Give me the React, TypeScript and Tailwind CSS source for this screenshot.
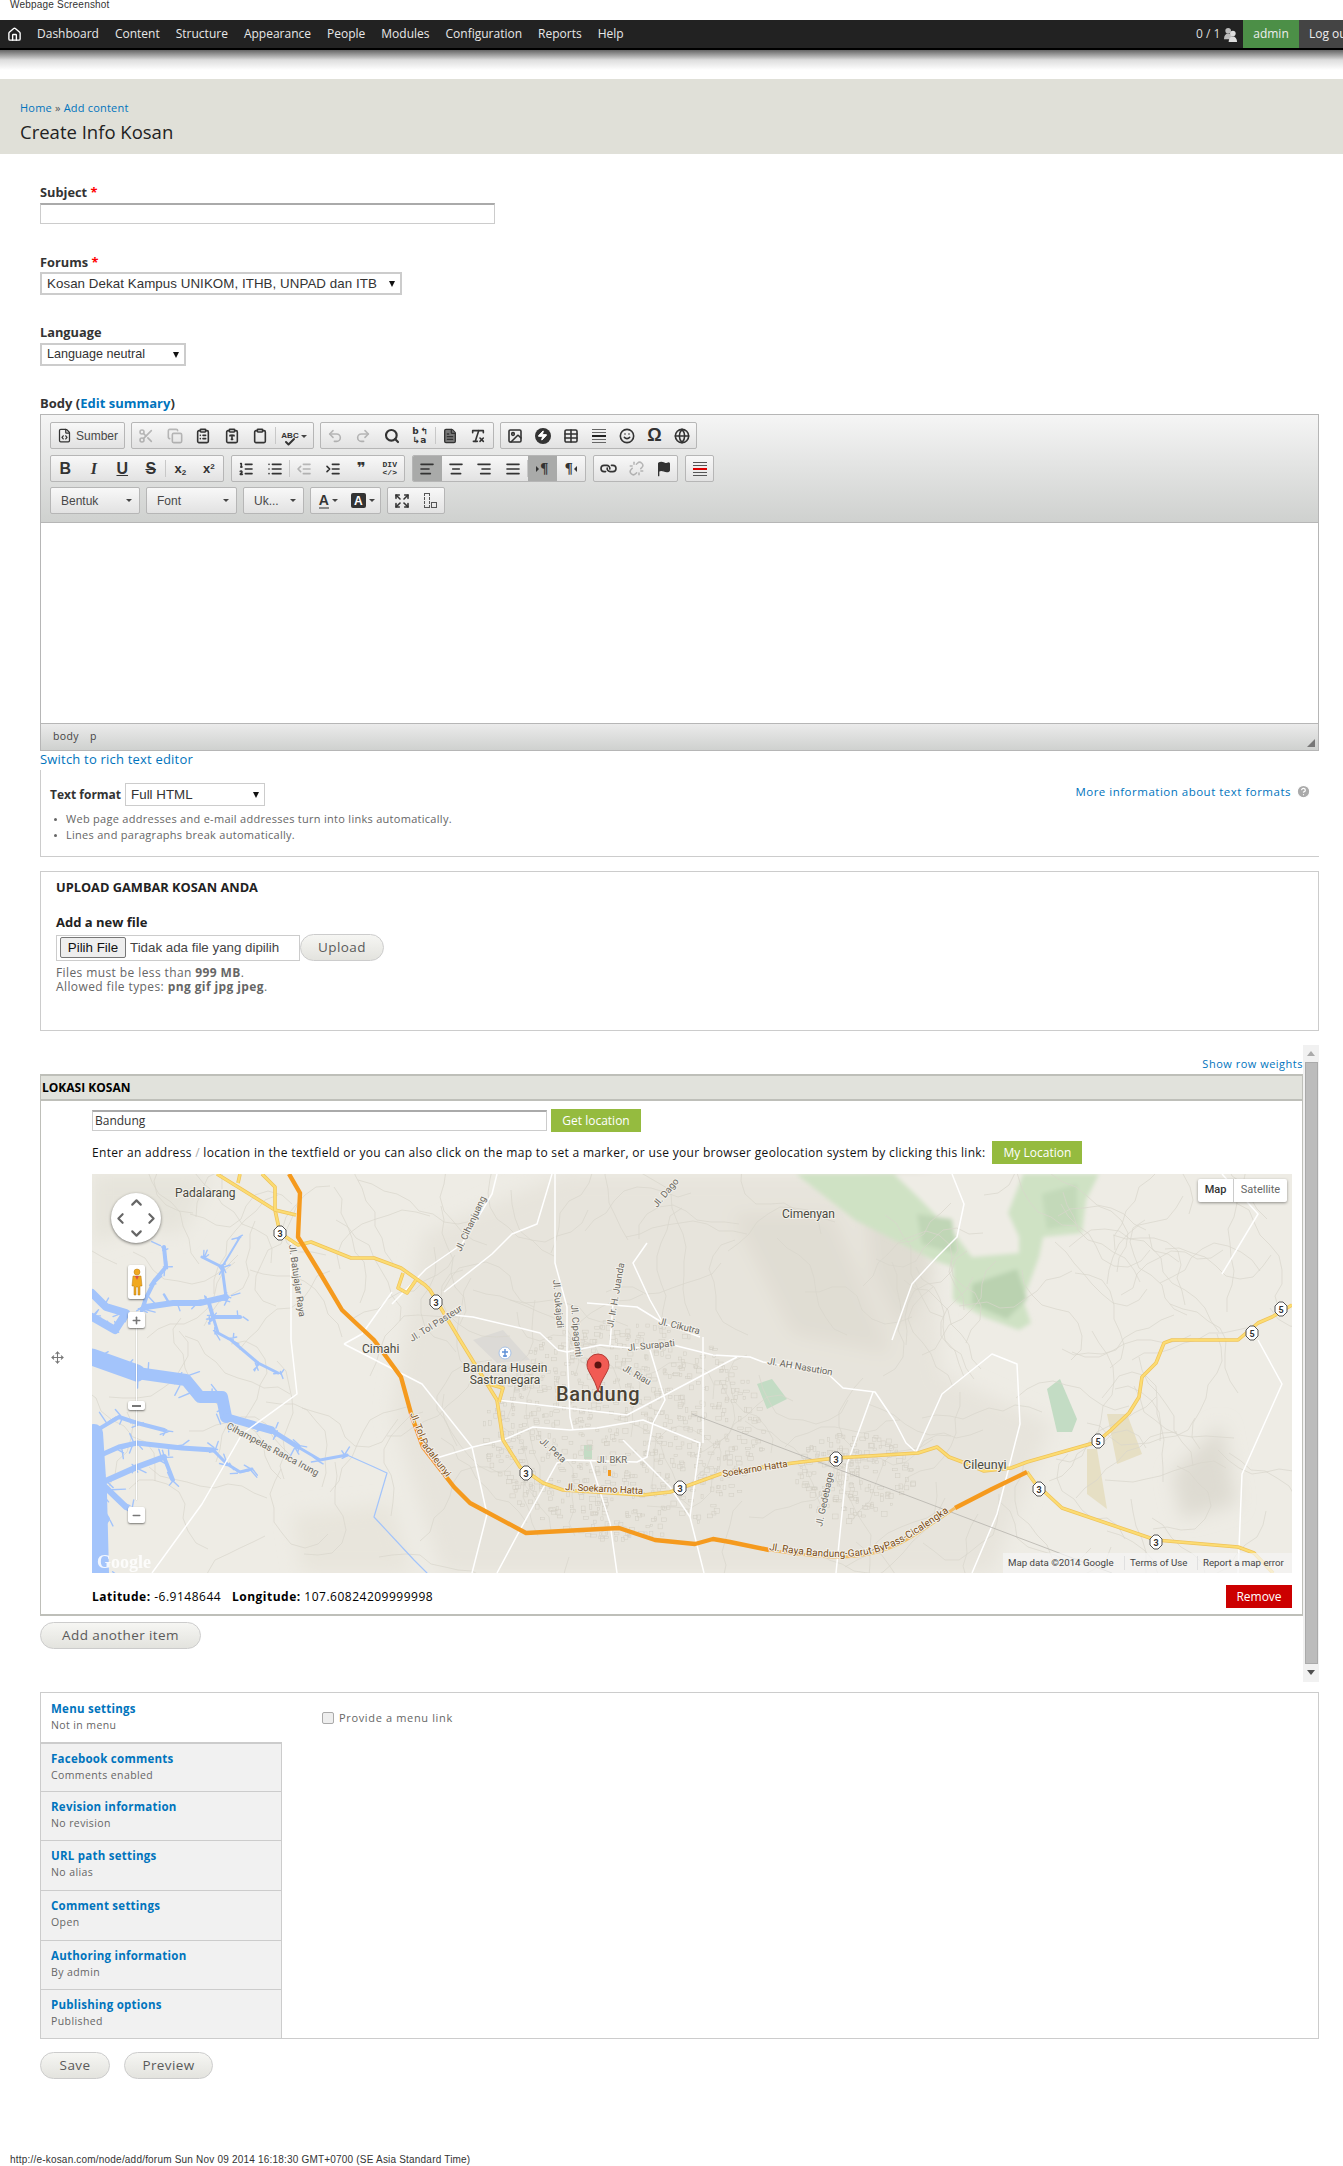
import {
  Home,
  Scissors,
  Copy,
  ClipboardList,
  ClipboardType,
  Clipboard,
  Undo2,
  Redo2,
  Search,
  Image,
  Zap,
  Table,
  Smile,
  Globe,
  ListOrdered,
  List,
  IndentDecrease,
  IndentIncrease,
  AlignLeft,
  AlignCenter,
  AlignRight,
  AlignJustify,
  Link,
  Unlink,
  Flag,
  Expand,
  Check,
  Move,
  FileCode,
  FileText,
  RemoveFormatting,
  HelpCircle,
  ChevronUp,
  ChevronDown,
  ChevronLeft,
  ChevronRight,
  Plus,
  Minus,
} from "lucide-react";
import type { ReactNode } from "react";

const navItems = ["Dashboard", "Content", "Structure", "Appearance", "People", "Modules", "Configuration", "Reports", "Help"];

const tabs = [
  { title: "Menu settings", sub: "Not in menu", h: "h-[49px]" },
  { title: "Facebook comments", sub: "Comments enabled", h: "h-[49px]" },
  { title: "Revision information", sub: "No revision", h: "h-[49px]" },
  { title: "URL path settings", sub: "No alias", h: "h-[50px]" },
  { title: "Comment settings", sub: "Open", h: "h-[50px]" },
  { title: "Authoring information", sub: "By admin", h: "h-[49px]" },
  { title: "Publishing options", sub: "Published", h: "h-[49px]" },
];

const Btn = ({ children, active, w = "w-[28.5px]", dim }: { children: ReactNode; active?: boolean; w?: string; dim?: boolean }) => (
  <div className={`flex h-full shrink-0 ${w} items-center justify-center ${active ? "bg-[#a9aaa9]" : ""} ${dim ? "opacity-30" : ""}`}>{children}</div>
);

const Sep = () => <div className="my-[4px] w-px shrink-0 bg-[#c8c8c8]" />;

const Group = ({ children, className = "" }: { children: ReactNode; className?: string }) => (
  <div className={`flex h-[27px] overflow-hidden rounded-[2px] border border-[#b6b6b6] bg-gradient-to-b from-[#f8f8f8] to-[#e2e2e2] ${className}`}>{children}</div>
);

const Caret = ({ className = "" }: { className?: string }) => (
  <span className={`inline-block h-0 w-0 shrink-0 border-x-[3px] border-t-[3px] border-x-transparent border-t-[#444] ${className}`} />
);

const Combo = ({ label, w }: { label: string; w: string }) => (
  <Group className={`${w} items-center justify-between pr-[7px] pl-[10px] font-['Liberation_Sans',sans-serif] text-[12px] text-[#484848]`}>
    <span>{label}</span>
    <Caret />
  </Group>
);

const ic = { size: 16, strokeWidth: 2.4, color: "#333" };

const Toolbar = () => (
  <div className="flex h-[108px] flex-col gap-[5px] border-b border-[#b6b6b6] bg-gradient-to-b from-[#f5f5f5] to-[#cfd1cf] pt-[7px] pl-[9px]">
    <div className="flex gap-[6px]">
      <Group>
        <div className="flex w-[73px] items-center gap-[4px] pl-[6px] font-['Liberation_Sans',sans-serif] text-[12px] text-[#484848]">
          <FileCode size={15} color="#333" />
          Sumber
        </div>
      </Group>
      <Group>
        <Btn dim><Scissors {...ic} /></Btn>
        <Btn dim><Copy {...ic} /></Btn>
        <Btn><ClipboardList {...ic} /></Btn>
        <Btn><ClipboardType {...ic} /></Btn>
        <Btn><Clipboard {...ic} /></Btn>
        <Sep />
        <Btn w="w-[37px]">
          <div className="relative flex items-start font-['Liberation_Sans',sans-serif] text-[8px] leading-[10px] font-bold text-[#333]">
            ABC
            <Check size={12} strokeWidth={4} color="#333" className="absolute top-[5px] left-[3px]" />
            <Caret className="mt-[4px] ml-[2px]" />
          </div>
        </Btn>
      </Group>
      <Group>
        <Btn dim><Undo2 {...ic} /></Btn>
        <Btn dim><Redo2 {...ic} /></Btn>
        <Btn><Search size={16} strokeWidth={3.2} color="#333" /></Btn>
        <Btn>
          <div className="grid w-[16px] grid-cols-2 font-['DejaVu_Sans',sans-serif] text-[9px] leading-[9px] font-bold text-[#333]">
            <span>b</span>
            <span>↰</span>
            <span>↳</span>
            <span>a</span>
          </div>
        </Btn>
        <Sep />
        <Btn><FileText size={16} fill="#777" color="#333" /></Btn>
        <Btn><RemoveFormatting {...ic} /></Btn>
      </Group>
      <Group>
        <Btn w="w-[28px]"><Image {...ic} /></Btn>
        <Btn w="w-[28px]">
          <div className="flex h-[16px] w-[16px] items-center justify-center rounded-full bg-[#333]">
            <Zap size={11} fill="#fff" color="#fff" />
          </div>
        </Btn>
        <Btn w="w-[28px]"><Table {...ic} /></Btn>
        <Btn w="w-[28px]">
          <div className="flex w-[14px] flex-col gap-[2px]">
            <div className="h-px bg-[#666]" />
            <div className="h-px bg-[#666]" />
            <div className="h-[2px] bg-[#222]" />
            <div className="h-px bg-[#666]" />
            <div className="h-px bg-[#666]" />
          </div>
        </Btn>
        <Btn w="w-[28px]"><Smile {...ic} /></Btn>
        <Btn w="w-[28px]"><span className="font-['Liberation_Sans',sans-serif] text-[18px] font-bold text-[#333]">Ω</span></Btn>
        <Btn w="w-[27px]"><Globe {...ic} /></Btn>
      </Group>
    </div>
    <div className="mt-[1px] flex gap-[7px]">
      <Group className="font-['Liberation_Serif',serif] text-[16px] font-bold text-[#333]">
        <Btn><span className="font-['Liberation_Sans',sans-serif]">B</span></Btn>
        <Btn><span className="italic">I</span></Btn>
        <Btn><span className="font-['Liberation_Sans',sans-serif] underline">U</span></Btn>
        <Btn><span className="font-['Liberation_Sans',sans-serif] line-through">S</span></Btn>
        <Sep />
        <Btn><span className="font-['Liberation_Sans',sans-serif] text-[13px]">x<sub className="text-[8px]">2</sub></span></Btn>
        <Btn><span className="font-['Liberation_Sans',sans-serif] text-[13px]">x<sup className="text-[8px]">2</sup></span></Btn>
      </Group>
      <Group>
        <Btn><ListOrdered {...ic} /></Btn>
        <Btn><List {...ic} /></Btn>
        <Sep />
        <Btn dim><IndentDecrease {...ic} /></Btn>
        <Btn><IndentIncrease {...ic} /></Btn>
        <Btn><span className="font-['DejaVu_Sans',sans-serif] text-[15px] leading-none font-bold text-[#333]">❞</span></Btn>
        <Btn><span className="text-center font-['Liberation_Mono',monospace] text-[8px] leading-[8px] font-bold text-[#333]">DIV<br />&lt;/&gt;</span></Btn>
      </Group>
      <Group>
        <Btn active><AlignLeft {...ic} /></Btn>
        <Btn><AlignCenter {...ic} /></Btn>
        <Btn><AlignRight {...ic} /></Btn>
        <Btn><AlignJustify {...ic} /></Btn>
        <Sep />
        <Btn active>
          <span className="h-0 w-0 border-y-[3px] border-l-[3px] border-y-transparent border-l-[#333]" />
          <span className="ml-[1px] font-['Liberation_Serif',serif] text-[15px] font-bold text-[#333]">¶</span>
        </Btn>
        <Btn>
          <span className="mr-[1px] font-['Liberation_Serif',serif] text-[15px] font-bold text-[#333]">¶</span>
          <span className="h-0 w-0 border-y-[3px] border-r-[3px] border-y-transparent border-r-[#333]" />
        </Btn>
      </Group>
      <Group>
        <Btn w="w-[28px]"><Link size={15} strokeWidth={2.6} color="#333" className="rotate-45" /></Btn>
        <Btn w="w-[28px]" dim><Unlink size={15} strokeWidth={2.4} color="#333" /></Btn>
        <Btn w="w-[27px]"><Flag size={16} fill="#333" color="#333" /></Btn>
      </Group>
      <Group>
        <Btn w="w-[27px]">
          <div className="flex w-[14px] flex-col gap-[2px]">
            <div className="h-[1px] bg-[#555]" />
            <div className="h-[1px] bg-[#555]" />
            <div className="h-[2px] bg-[#d00]" />
            <div className="h-[1px] bg-[#555]" />
            <div className="h-[1px] bg-[#555]" />
          </div>
        </Btn>
      </Group>
    </div>
    <div className="flex gap-[6px]">
      <Combo label="Bentuk" w="w-[90px]" />
      <Combo label="Font" w="w-[91px]" />
      <Combo label="Uk..." w="w-[61px]" />
      <Group>
        <Btn w="w-[34.5px]">
          <div className="flex flex-col items-center border-b-2 border-[#888] font-['Liberation_Sans',sans-serif] text-[14px] leading-[14px] font-bold text-[#333]">A</div>
          <Caret className="ml-[3px]" />
        </Btn>
        <Btn w="w-[34.5px]">
          <div className="flex h-[15px] w-[15px] items-center justify-center rounded-[2px] bg-[#333] font-['Liberation_Sans',sans-serif] text-[12px] font-bold text-white">A</div>
          <Caret className="ml-[3px]" />
        </Btn>
      </Group>
      <Group>
        <Btn w="w-[28px]"><Expand {...ic} /></Btn>
        <Btn w="w-[28px]">
          <div className="flex items-end gap-[1px]">
            <div className="h-[15px] w-[6px] border border-dashed border-[#555]" />
            <div className="h-[6px] w-[6px] border border-[#555]" />
          </div>
        </Btn>
      </Group>
    </div>
  </div>
);

const yellow = [
  "125,0 183,36 188,59 206,71 219,68 259,84 282,84 309,94 333,111 338,116 368,166 405,226 411,266 428,293 451,309 471,316 551,321 578,318 631,299 701,289 744,284 826,279 845,273 857,283 873,289 892,297 919,294 935,288 1005,268 1019,256 1037,239 1047,223 1050,203 1064,189 1072,169 1080,166 1146,166 1166,149 1180,143 1200,131",
  "935,298 943,309 970,334 1064,366 1146,373 1162,379 1181,399",
  "311,99 306,114 315,119 324,106",
  "148,0 146,9",
  "170,0 183,13 183,36 204,41",
  "393,209 411,214 407,228",
];

const orange = [
  "197,0 208,19 206,63 228,99 250,136 282,166 309,203 320,243 331,273 362,313 378,329 434,359 527,354 563,366 603,370 621,365 638,368 677,376",
  "863,334 900,315 935,298",
];

const white = [
  "361,141 381,143 428,154 448,159 466,176 475,178 508,171 538,174 581,171 621,181 658,183 671,188 735,199 751,214 783,218 802,246 814,269 824,278",
  "645,183 535,241",
  "558,176 573,226 561,249 555,283 545,288 475,286 465,289 428,356 405,399",
  "338,286 381,273 411,266 441,253 478,256 505,254 551,246 608,269 598,343 612,399",
  "405,226 535,241",
  "531,266 578,313 598,343",
  "611,163 611,269",
  "498,286 518,349 525,399",
  "555,69 541,89 558,126 571,149 608,163",
  "495,129 545,133 571,149",
  "518,171 521,129",
  "463,0 463,89 475,133 475,176 478,243 481,256",
  "300,130 334,95 370,70 400,20 405,0",
  "352,118 400,80 420,60 445,50 460,0",
  "199,66 199,166 205,220 150,260 110,330 60,399",
  "252,170 330,210 380,273 395,340 380,399",
  "300,118 270,160 252,170",
  "781,218 755,290 744,399",
  "860,0 872,30 865,63 845,83 820,110 800,166",
  "824,278 850,220 900,180 925,190 928,250 905,340 880,399",
  "1130,0 1166,40 1130,100",
  "1166,166 1190,210 1150,300 1146,399",
];

const water = [
  { w: 17, p: "0,183 45,199" },
  { w: 12, p: "45,199 94,206 108,223 130,223 134,243" },
  { w: 8, p: "134,243 179,256" },
  { w: 5, p: "179,256 206,273" },
  { w: 3, p: "206,273 228,286 255,281" },
  { w: 1.2, p: "255,281 282,293 295,299 282,343 322,386 335,399" },
  { w: 4, p: "72,73 74,93 63,106 54,124 50,136" },
  { w: 6, p: "54,133 81,129 108,129 134,123" },
  { w: 3, p: "134,123 130,93 110,83" },
  { w: 2, p: "130,93 148,63" },
  { w: 4, p: "117,129 121,143 148,143" },
  { w: 3, p: "121,143 126,159 139,166 166,189 186,199" },
  { w: 8, p: "0,119 14,133 34,139 23,156 0,143" },
  { w: 4, p: "0,259 27,243 45,249 72,256" },
  { w: 5, p: "0,285 27,273 45,269 90,274 121,276" },
  { w: 3, p: "121,276 135,290 148,298 160,295" },
  { w: 4, p: "81,306 72,283" },
  { w: 6, p: "72,283 45,293 9,309 34,333" },
  { w: 6, p: "5,329 15,345 0,366" },
  { w: 18, p: "2,259 6,320 8,399" },
];

// seeded so the picture stays the same between renders
let seed = 7;
const rnd = () => {
  seed = (seed * 16807) % 2147483647;
  return seed / 2147483647;
};

const contours = Array.from({ length: 170 }, () => {
  let x = rnd() * 1200;
  let y = rnd() * 399;
  const pts = [`${x.toFixed(0)},${y.toFixed(0)}`];
  let a = rnd() * 6.28;
  for (let i = 0; i < 9; i++) {
    a += (rnd() - 0.5) * 1.4;
    x += Math.cos(a) * 14;
    y += Math.sin(a) * 14;
    pts.push(`${x.toFixed(0)},${y.toFixed(0)}`);
  }
  return pts.join(" ");
});

const blocks = Array.from({ length: 900 }, () => {
  const a = rnd() * 6.28;
  const r = Math.sqrt(rnd());
  const east = rnd() > 0.8;
  const cx = east ? 760 : 530;
  const cy = east ? 300 : 255;
  const rx = east ? 60 : 140;
  const ry = east ? 45 : 110;
  return { x: cx + Math.cos(a) * r * rx, y: cy + Math.sin(a) * r * ry, w: 2 + rnd() * 4, h: 2 + rnd() * 3 };
});

const spurs = water.flatMap((r) => {
  const pts = r.p.split(" ").map((s) => s.split(",").map(Number));
  const out: string[] = [];
  pts.forEach(([x, y]) => {
    for (let i = 0; i < 3; i++) {
      const a = rnd() * 6.28;
      const l = 3 + rnd() * 5 + r.w * 0.5;
      out.push(`M${x + (rnd() - 0.5) * r.w * 2} ${y + (rnd() - 0.5) * r.w}l${(Math.cos(a) * l).toFixed(1)} ${(Math.sin(a) * l).toFixed(1)}`);
    }
  });
  return r.w > 1.5 ? out : [];
});

const Shield = ({ x, y, n }: { x: number; y: number; n: string }) => (
  <g transform={`translate(${x} ${y})`}>
    <polygon points="-6,-3 -2,-7 2,-7 6,-3 6,3 2,7 -2,7 -6,3" fill="#fff" stroke="#555" />
    <text textAnchor="middle" y="3.5" fontSize="9" fontWeight="700" fill="#333">{n}</text>
  </g>
);

const haloed = { paintOrder: "stroke", stroke: "#f2f0ea", strokeWidth: 2 } as const;

const MapView = () => (
  <div className="relative mt-[10px] h-[399px] w-[1200px] overflow-hidden bg-[#eeece5]">
    <svg viewBox="0 0 1200 399" className="absolute inset-0 h-full w-full font-['Roboto',sans-serif]">
      <defs>
        <filter id="soft" x="-10%" y="-10%" width="120%" height="120%">
          <feGaussianBlur stdDeviation="9" />
        </filter>
        <filter id="softer">
          <feGaussianBlur stdDeviation="2" />
        </filter>
      </defs>
      <g filter="url(#soft)">
        <polygon points="330,60 470,0 780,0 840,80 850,200 960,250 900,399 350,399 300,240" fill="#e7e4dc" />
        <polygon points="640,40 740,40 800,180 700,160" fill="#e0ddd3" />
        <polygon points="1080,300 1130,250 1145,330 1090,345" fill="#dedbd2" />
        <polygon points="200,340 300,330 320,399 210,399" fill="#e8e5dc" />
        <polygon points="0,0 120,0 90,60 40,55 0,70" fill="#e6e4db" />
        <polygon points="770,0 780,100 810,160 840,100 830,0" fill="#dfdcd2" />
      </g>
      <g filter="url(#softer)">
        <polygon points="704,0 763,46 841,86 861,93 861,126 892,143 927,156 939,149 931,126 947,83 951,63 990,59 994,26 1007,0" fill="#cfe2c4" />
        <polygon points="802,0 826,23 865,63 880,83 927,79 927,63 916,39 931,0" fill="#eeece5" />
        <polygon points="880,110 925,95 935,125 915,145 880,130" fill="#bad2b0" />
        <polygon points="825,40 860,45 865,80 830,70" fill="#c0d6b6" />
        <polygon points="950,20 985,10 985,50 955,55" fill="#c3d9b9" />
      </g>
      <polygon points="955,215 968,205 985,245 980,258 965,258" fill="#c3dcc4" />
      <polygon points="995,275 1005,275 1015,335 995,320" fill="#e6dfc4" />
      <polygon points="1015,240 1035,240 1050,280 1025,290" fill="#e6dfc4" />
      <polygon points="665,210 680,205 695,225 675,235" fill="#c3dcc4" />
      <polygon points="492,271 500,271 500,285 492,285" fill="#c3dcc4" />
      <polygon points="381,166 411,156 438,186 405,189" fill="#dcdad6" />
      {contours.map((p, i) => (
        <polyline key={i} points={p} fill="none" stroke="#d9d6cb" strokeWidth="0.7" />
      ))}
      {blocks.map((b, i) => (
        <rect key={i} x={b.x} y={b.y} width={b.w} height={b.h} fill="none" stroke="#d2cec3" strokeWidth="0.5" />
      ))}
      <path d={spurs.join("")} fill="none" stroke="#a3c4fb" strokeWidth="1.4" strokeLinecap="round" />
      {water.map((r, i) => (
        <polyline key={i} points={r.p} fill="none" stroke="#a3c4fb" strokeWidth={r.w} strokeLinejoin="round" strokeLinecap="round" />
      ))}
      {white.map((p, i) => (
        <polyline key={i} points={p} fill="none" stroke="#fff" strokeWidth="1.5" strokeLinejoin="round" />
      ))}
      <line x1="600" y1="240" x2="1020" y2="399" stroke="#b5b3ac" strokeWidth="0.8" />
      {yellow.map((p, i) => (
        <g key={i}>
          <polyline points={p} fill="none" stroke="#efc35a" strokeWidth="3.6" strokeLinejoin="round" />
          <polyline points={p} fill="none" stroke="#fcdc72" strokeWidth="2.2" strokeLinejoin="round" />
        </g>
      ))}
      {orange.map((p, i) => (
        <polyline key={i} points={p} fill="none" stroke="#f59a1e" strokeWidth="4.4" strokeLinejoin="round" />
      ))}
      <path id="bypass" d="M677 376 C 720 382 770 392 814 366 C 830 357 848 344 863 334" fill="none" stroke="#f2bc66" strokeWidth="3" />
      <path id="tollroad" d="M318 240 L331 273 L362 313" fill="none" />
      <g fill="#4a4a40" fontSize="12" style={haloed}>
        <text x="83" y="23">Padalarang</text>
        <text x="690" y="44">Cimenyan</text>
        <text x="270" y="179">Cimahi</text>
        <text x="413" y="198" textAnchor="middle">Bandara Husein</text>
        <text x="413" y="210" textAnchor="middle">Sastranegara</text>
        <text x="871" y="295" fontSize="12.5">Cileunyi</text>
      </g>
      <text x="464" y="227" fontSize="20" fontWeight="500" letterSpacing="0.7" fill="#4a4335" style={haloed}>Bandung</text>
      <g fill="#6a675e" fontSize="9.5" style={haloed}>
        <text transform="translate(197 71) rotate(82)">Jl. Batujajar Raya</text>
        <text transform="translate(369 78) rotate(-65)">Jl. Cihanjuang</text>
        <text transform="translate(461 106) rotate(85)">Jl. Sukajadi</text>
        <text transform="translate(479 131) rotate(85)">Jl. Cipaganti</text>
        <text transform="translate(521 154) rotate(-80)">Jl. Ir. H. Juanda</text>
        <text transform="translate(565 34) rotate(-50)">Jl. Dago</text>
        <text transform="translate(566 150) rotate(14)">Jl. Cikutra</text>
        <text transform="translate(536 177) rotate(-6)">Jl. Surapati</text>
        <text transform="translate(530 196) rotate(30)">Jl. Riau</text>
        <text transform="translate(447 268) rotate(42)">Jl. Peta</text>
        <text x="505" y="289">Jl. BKR</text>
        <text transform="translate(134 254) rotate(28)">Cihampelas Ranca Irung</text>
        <text transform="translate(675 190) rotate(10)">Jl. AH Nasution</text>
        <text transform="translate(320 168) rotate(-32)">Jl. Tol Pasteur</text>
        <text transform="translate(730 353) rotate(-78)">Jl. Gedebage</text>
      </g>
      <g fill="#7a4a10" fontSize="9.5" style={haloed}>
        <text>
          <textPath href="#tollroad">Jl. Tol Padaleunyi</textPath>
        </text>
        <text transform="translate(473 316) rotate(3)">Jl. Soekarno Hatta</text>
        <text transform="translate(631 303) rotate(-9)">Soekarno Hatta</text>
        <text fontSize="10">
          <textPath href="#bypass">Jl. Raya Bandung-Garut-ByPass-Cicalengka</textPath>
        </text>
      </g>
      <rect x="516" y="296" width="3" height="6" fill="#f59a1e" />
      <Shield x={188} y={59} n="3" />
      <Shield x={344} y={128} n="3" />
      <Shield x={434} y={299} n="3" />
      <Shield x={588} y={314} n="3" />
      <Shield x={744} y={285} n="3" />
      <Shield x={947} y={315} n="3" />
      <Shield x={1064} y={368} n="3" />
      <Shield x={1006} y={267} n="5" />
      <Shield x={1160} y={159} n="5" />
      <Shield x={1189} y={135} n="5" />
      <circle cx="413" cy="179" r="6" fill="#fff" stroke="#a9c3e5" />
      <path d="M413 175v8M410 178h6M411 182h4" stroke="#5c8fd6" strokeWidth="1.4" />
      <path d="M506 218 C503 204 495 198 495 191 a11 11 0 0 1 22 0 C517 198 509 204 506 218Z" fill="#f15b54" stroke="#b33a34" />
      <circle cx="506" cy="191" r="3.5" fill="#5b1410" />
      <text x="5" y="394" fontSize="18" fontWeight="700" fill="#fff" opacity="0.85" fontFamily="Liberation Serif, serif">Google</text>
    </svg>

    {/* pan control */}
    <div className="absolute top-[19px] left-[19px] flex h-[50px] w-[50px] items-center justify-center rounded-full bg-white shadow-[0_1px_3px_rgba(0,0,0,0.5)]">
      <ChevronUp size={17} strokeWidth={3} color="#666" className="absolute top-[1px]" />
      <ChevronDown size={17} strokeWidth={3} color="#666" className="absolute bottom-[1px]" />
      <ChevronLeft size={17} strokeWidth={3} color="#666" className="absolute left-[1px]" />
      <ChevronRight size={17} strokeWidth={3} color="#666" className="absolute right-[1px]" />
    </div>
    {/* pegman and zoom slider */}
    <div className="absolute top-[91px] left-[36px] flex h-[34px] w-[17px] items-center justify-center rounded-[2px] bg-white shadow-[0_1px_2px_rgba(0,0,0,0.5)]">
      <svg viewBox="0 0 12 28" className="h-[28px] w-[12px]">
        <circle cx="6" cy="4" r="3" fill="#f1a91f" stroke="#b67a10" strokeWidth="0.5" />
        <path d="M2 8h8l1 10h-2v9H7v-8H5v8H3v-9H1z" fill="#f1a91f" stroke="#b67a10" strokeWidth="0.5" />
        <path d="M4 8h4l-2 4z" fill="#d9504a" />
      </svg>
    </div>
    <div className="absolute top-[146px] left-[44px] h-[180px] w-px bg-[#fff] shadow-[0_0_1px_rgba(0,0,0,0.5)]" />
    <div className="absolute top-[138px] left-[36px] flex h-[16px] w-[17px] items-center justify-center rounded-[2px] bg-white shadow-[0_1px_2px_rgba(0,0,0,0.5)]">
      <Plus size={11} strokeWidth={3.5} color="#777" />
    </div>
    <div className="absolute top-[227px] left-[36px] flex h-[9px] w-[17px] items-center justify-center rounded-[2px] bg-white shadow-[0_1px_2px_rgba(0,0,0,0.5)]">
      <div className="h-[2px] w-[9px] bg-[#777]" />
    </div>
    <div className="absolute top-[333px] left-[36px] flex h-[16px] w-[17px] items-center justify-center rounded-[2px] bg-white shadow-[0_1px_2px_rgba(0,0,0,0.5)]">
      <Minus size={11} strokeWidth={3.5} color="#777" />
    </div>
    {/* map type */}
    <div className="absolute top-[5px] right-[5px] flex h-[23px] rounded-[2px] bg-white font-['Roboto',sans-serif] text-[11px] shadow-[0_1px_3px_rgba(0,0,0,0.4)]">
      <div className="flex w-[36px] items-center justify-center border-r border-[#ccc] font-medium text-[#333]">Map</div>
      <div className="flex w-[53px] items-center justify-center text-[#666]">Satellite</div>
    </div>
    {/* attribution */}
    <div className="absolute right-0 bottom-0 flex h-[20px] items-center bg-[rgba(245,245,245,0.7)] font-['Roboto',sans-serif] text-[9.7px] text-[#444]">
      <span className="w-[121px] pl-[5px]">Map data ©2014 Google</span>
      <span className="w-[73px] border-l border-[#e0e0e0] pl-[5px]">Terms of Use</span>
      <span className="w-[95px] border-l border-[#e0e0e0] pl-[5px]">Report a map error</span>
    </div>
  </div>
);

const Required = () => <span className="text-[#f00]"> *</span>;

const PillButton = ({ children, className = "" }: { children: ReactNode; className?: string }) => (
  <div className={`flex h-[27px] items-center justify-center rounded-full border border-[#ccc] bg-gradient-to-b from-[#f6f6f3] to-[#e3e3de] text-[13.5px] tracking-[0.4px] text-[#5a5a5a] ${className}`}>{children}</div>
);

const SelectBox = ({ label, thin, className = "" }: { label: string; thin?: boolean; className?: string }) => (
  <div className={`flex items-center justify-between ${thin ? "border" : "border-2"} border-[#ccc] pr-[5px] pl-[5px] font-['Liberation_Sans',sans-serif] text-[#333] ${className}`}>
    <span>{label}</span>
    <span className="h-0 w-0 border-x-[3px] border-t-[6px] border-x-transparent border-t-[#111]" />
  </div>
);

export default function App() {
  return (
    <div className="h-[2166px] w-[1343px] overflow-hidden bg-white font-['Open_Sans',sans-serif] text-[#333]">
      <div className="h-[20px] pl-[10px] font-['Liberation_Sans',sans-serif] text-[10px] leading-[10px] tracking-[0.2px] text-[#333]">Webpage Screenshot</div>

      {/* toolbar */}
      <div className="flex h-[30px] items-start justify-between border-b-2 border-black bg-[#222] text-[12px] text-[#e8e8e8]">
        <div className="flex h-[28px] items-center">
          <Home size={15} color="#fff" strokeWidth={2.2} className="ml-[7px]" />
          <div className="ml-[15px] flex gap-[16px]">
            {navItems.map((item) => (
              <span key={item}>{item}</span>
            ))}
          </div>
        </div>
        <div className="flex h-[28px] w-[148px] shrink-0 items-center overflow-hidden">
          <span className="ml-[1px] w-[27px] shrink-0 text-[#ddd]">0 / 1</span>
          <svg viewBox="0 0 16 16" className="h-[15px] w-[15px] shrink-0">
            <circle cx="5.5" cy="4" r="3" fill="#bbb" />
            <path d="M1 13c0-4 2-6 4.5-6S10 9 10 13z" fill="#bbb" />
            <circle cx="10.5" cy="7" r="3" fill="#ddd" />
            <path d="M6 16c0-4 2-6 4.5-6s4.5 2 4.5 6z" fill="#ddd" />
          </svg>
          <div className="ml-[5px] flex h-full w-[56px] shrink-0 items-center justify-center bg-[#4c8f47] text-[#eee]">admin</div>
          <div className="flex h-full w-[60px] shrink-0 items-center bg-[#444] pl-[10px] text-[#eee]">Log out</div>
        </div>
      </div>
      <div className="h-[20px] bg-gradient-to-b from-[#666] via-[#ddd] to-white" />
      <div className="h-[9px]" />

      {/* page header */}
      <div className="h-[75px] bg-[#e0e0d8] pt-[22px] pl-[20px]">
        <div className="text-[11px] leading-[14px] tracking-[0.2px] text-[#0074bd]">
          Home <span className="text-[#555]">»</span> Add content
        </div>
        <h1 className="mt-[5px] text-[18.5px] leading-[24px] text-[#222]">Create Info Kosan</h1>
      </div>

      {/* form */}
      <div className="pt-[30px] pr-[24px] pl-[40px]">
        <label className="block h-[19px] text-[12.8px] leading-[17px] font-bold">Subject<Required /></label>
        <div className="h-[21px] w-[455px] border border-[#ccc] border-t-2 border-t-[#aaa]" />

        <label className="mt-[30px] block h-[18px] text-[12.8px] leading-[16px] font-bold">Forums<Required /></label>
        <SelectBox label="Kosan Dekat Kampus UNIKOM, ITHB, UNPAD dan ITB" className="h-[23px] w-[362px] text-[13.33px] tracking-[0.06px]" />

        <label className="mt-[30px] block h-[18px] text-[12.8px] leading-[15px] font-bold">Language</label>
        <SelectBox label="Language neutral" className="h-[23px] w-[146px] text-[12.6px]" />

        <label className="mt-[29px] block h-[19px] text-[13px] leading-[17px] font-bold">
          Body (<span className="text-[#0074bd]">Edit summary</span>)
        </label>

        {/* editor */}
        <div className="border border-[#b6b6b6]">
          <Toolbar />
          <div className="h-[200px] bg-white" />
          <div className="relative flex h-[27px] items-center gap-[11px] border-t border-[#b6b6b6] bg-gradient-to-b from-[#ebebeb] to-[#cfd1cf] pl-[12px] text-[10.5px] tracking-[0.4px] text-[#444]">
            <span>body</span>
            <span>p</span>
            <span className="absolute right-[3px] bottom-[3px] h-0 w-0 border-b-[8px] border-l-[8px] border-b-[#777] border-l-transparent" />
          </div>
        </div>
        <div className="h-[19px] text-[13px] leading-[17px] tracking-[0.2px] text-[#0074bd]">Switch to rich text editor</div>

        {/* text format */}
        <div className="h-[87px] border-b border-l border-[#ccc] pt-[13px] pl-[9px] text-[11px]">
          <div className="flex items-start justify-between pr-[8px]">
            <div className="flex items-center gap-[4px]">
              <span className="text-[12px] font-bold">Text format</span>
              <SelectBox label="Full HTML" thin className="h-[23px] w-[140px] text-[13.33px]" />
            </div>
            <div className="flex items-center gap-[5px] text-[11.5px] text-[#0074bd]">
              <span className="tracking-[0.5px]">More information about text formats</span>
              <HelpCircle size={15} fill="#aaa" color="#fff" />
            </div>
          </div>
          <ul className="mt-[5px] text-[#666]">
            {["Web page addresses and e-mail addresses turn into links automatically.", "Lines and paragraphs break automatically."].map((t) => (
              <li key={t} className="flex h-[16px] items-center tracking-[0.28px]">
                <span className="mr-[9px] ml-[4px] h-[3px] w-[3px] rounded-full bg-[#666]" />
                {t}
              </li>
            ))}
          </ul>
        </div>

        {/* upload */}
        <div className="mt-[14px] h-[160px] border border-[#ccc] pt-[6px] pl-[15px]">
          <div className="text-[12.8px] leading-[18px] font-bold text-[#222]">UPLOAD GAMBAR KOSAN ANDA</div>
          <div className="mt-[17px] text-[13px] leading-[18px] font-bold text-[#222]">Add a new file</div>
          <div className="mt-[3px] flex items-center font-['Liberation_Sans',sans-serif] text-[13.33px]">
            <div className="flex h-[26px] w-[244px] items-center border border-[#ccc] pl-[3px]">
              <div className="flex h-[21px] w-[66px] items-center justify-center rounded-[2px] border border-[#777] bg-[#eee] text-[#111]">Pilih File</div>
              <span className="ml-[4px] text-[#444]">Tidak ada file yang dipilih</span>
            </div>
            <PillButton className="w-[84px] font-['Open_Sans',sans-serif]">Upload</PillButton>
          </div>
          <div className="mt-[5px] text-[12px] leading-[14px] tracking-[0.4px] text-[#666]">
            Files must be less than <b>999 MB</b>.<br />
            Allowed file types: <b>png gif jpg jpeg</b>.
          </div>
        </div>

        {/* location table */}
        <div className="mt-[14px] flex h-[637px]">
          <div className="flex-1">
            <div className="flex h-[29px] items-start justify-end pt-[11px] text-[11px] leading-[15px] tracking-[0.5px] text-[#0074bd]">Show row weights</div>
            <div className="border-x border-y-2 border-[#bebfb9]">
              <div className="flex h-[25px] items-center border-b-2 border-[#bebfb9] bg-[#e1e2dc] pl-[1px] text-[12px] font-bold text-black">LOKASI KOSAN</div>
              <div className="flex">
                <div className="flex w-[51px] shrink-0 items-center pl-[10px]">
                  <Move size={13} color="#777" />
                </div>
                <div className="w-[1200px] shrink-0 pt-[8px] pb-[6px] text-[12px] text-[#111]">
                  <div className="flex items-center gap-[4px]">
                    <div className="flex h-[21px] w-[455px] items-center border border-[#ccc] border-t-2 border-t-[#aaa] pl-[2px] text-[#333]">Bandung</div>
                    <div className="flex h-[23px] w-[90px] items-center justify-center bg-[#95bb3f] text-[#fff]">Get location</div>
                  </div>
                  <div className="mt-[9px] flex items-center gap-[7px]">
                    <span className="tracking-[0.32px]">Enter an address <span className="text-[#aaa]">/</span> location in the textfield or you can also click on the map to set a marker, or use your browser geolocation system by clicking this link:</span>
                    <div className="flex h-[23px] w-[90px] shrink-0 items-center justify-center bg-[#95bb3f] text-white">My Location</div>
                  </div>
                  <MapView />
                  <div className="mt-[12px] flex h-[23px] items-center justify-between">
                    <div className="tracking-[0.5px] text-black">
                      <b>Latitude:</b> -6.9148644 &nbsp; <b>Longitude:</b> 107.60824209999998
                    </div>
                    <div className="flex h-[23px] w-[66px] items-center justify-center bg-[#c00] text-white">Remove</div>
                  </div>
                </div>
              </div>
            </div>
            <PillButton className="mt-[6px] w-[161px]">Add another item</PillButton>
          </div>
          <div className="flex w-[16px] shrink-0 flex-col items-center bg-[#f1f1f1]">
            <span className="mt-[6px] h-0 w-0 border-x-[4px] border-b-[5px] border-x-transparent border-b-[#aaa]" />
            <div className="mt-[6px] w-[13px] flex-1 border border-[#aaa] bg-[#bcbcbc]" />
            <span className="mt-[6px] mb-[7px] h-0 w-0 border-x-[4px] border-t-[5px] border-x-transparent border-t-[#505050]" />
          </div>
        </div>

        {/* vertical tabs */}
        <div className="mt-[10px] flex h-[347px] overflow-hidden border border-[#ccc]">
          <div className="w-[241px] shrink-0 border-r border-[#ccc]">
            {tabs.map((t, i) => (
              <div
                key={t.title}
                className={`${t.h} pl-[10px] ${i === 0 ? "-mr-px bg-white pt-[8px]" : "border-t border-[#ccc] bg-[#f1f1f1] pt-[7px]"} ${i === 1 ? "border-t-2" : ""}`}
              >
                <div className="text-[11.5px] leading-[16px] font-bold tracking-[0.25px] text-[#0074bd]">{t.title}</div>
                <div className="mt-[1px] text-[10.5px] leading-[15px] tracking-[0.4px] text-[#666]">{t.sub}</div>
              </div>
            ))}
          </div>
          <div className="flex h-fit items-center pt-[17px] pl-[40px] text-[11px] tracking-[0.65px] text-[#666]">
            <span className="mr-[5px] h-[12px] w-[12px] rounded-[2px] border border-[#aaa] bg-[#eee]" />
            Provide a menu link
          </div>
        </div>

        {/* actions */}
        <div className="mt-[13px] flex gap-[14px]">
          <PillButton className="w-[70px]">Save</PillButton>
          <PillButton className="w-[89px]">Preview</PillButton>
        </div>
      </div>

      <div className="mt-[75px] pl-[10px] font-['Liberation_Sans',sans-serif] text-[10px] leading-[12px] tracking-[0.2px] text-[#333]">
        http://e-kosan.com/node/add/forum Sun Nov 09 2014 16:18:30 GMT+0700 (SE Asia Standard Time)
      </div>
    </div>
  );
}
